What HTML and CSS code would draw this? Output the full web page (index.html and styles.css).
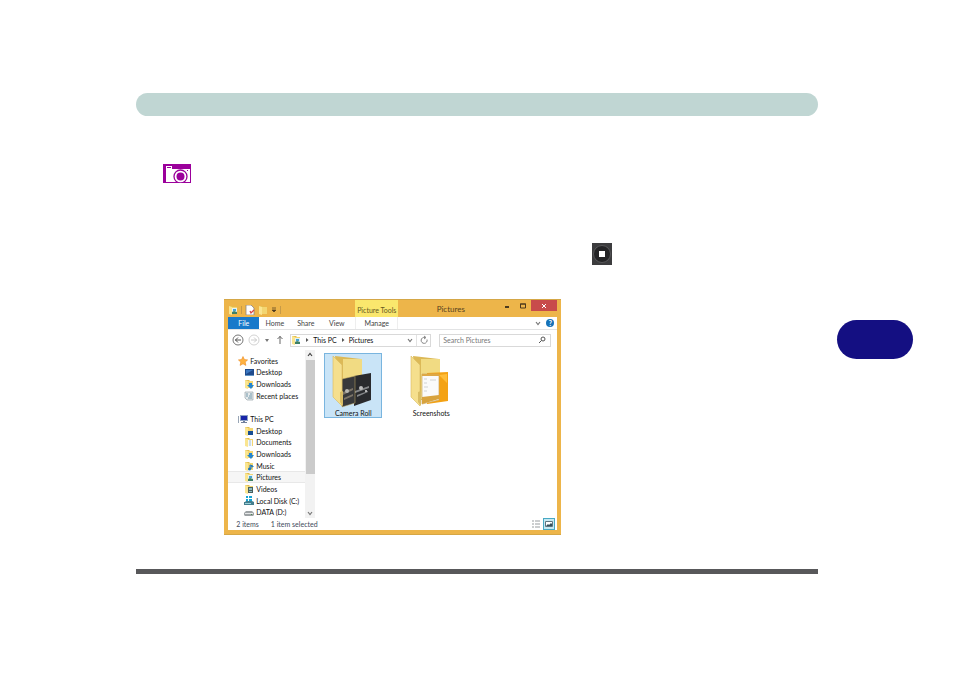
FILE: index.html
```html
<!DOCTYPE html>
<html lang="en">
<head>
<meta charset="utf-8">
<title>Pictures</title>
<link rel="stylesheet" href="styles.css">
</head>
<body>

<svg class="sprite" aria-hidden="true">
    <symbol id="folder" viewBox="0 0 10 10">
        <path d="M1 1h4l1 1h3v7H1z" fill="#e2bd4d"/>
        <path d="M1 1l3 1v8L1 9z" fill="#fae590"/>
        <path d="M4 2h5v7H4z" fill="#f3d671"/>
    </symbol>
    <symbol id="pictures" viewBox="0 0 10 10">
        <use href="#folder"/>
        <path d="M4 3h5v6H4z" fill="#e5f1f5"/>
        <path d="M5 4h3v2H5z" fill="#45a2cf"/>
        <path d="M4 7l2-1 3 1v2H4z" fill="#3f8065"/>
    </symbol>
    <symbol id="downloads" viewBox="0 0 10 10">
        <use href="#folder"/>
        <path d="M5 4h3v2h2L7 10 3 6h2z" fill="#2385cf"/>
    </symbol>
    <symbol id="desktop-folder" viewBox="0 0 10 10">
        <use href="#folder"/>
        <path d="M4 5h5v4H4z" fill="#174e94"/>
    </symbol>
    <symbol id="documents" viewBox="0 0 10 10">
        <use href="#folder"/>
        <path d="M4 3h4v6H4z" fill="#f5f8fa"/>
        <path d="M5 4h2M5 6h2M5 8h2" stroke="#699bc0" stroke-width=".6"/>
    </symbol>
    <symbol id="music" viewBox="0 0 10 10">
        <use href="#folder"/>
        <path d="M6 8V4l3 1v1L7 5v3" fill="none" stroke="#1b76bd"/>
        <circle cx="5.5" cy="8" r="1.5" fill="#1b76bd"/>
    </symbol>
    <symbol id="videos" viewBox="0 0 10 10">
        <use href="#folder"/>
        <path d="M4 3h5v6H4z" fill="#495f5e"/>
        <path d="M5 4h3v2H5zM5 7h3v1H5z" fill="#8cbdc2"/>
    </symbol>
    <symbol id="star" viewBox="0 0 10 10">
        <path d="M5 .5l1.4 3 3.2.4-2.4 2.2.7 3.3L5 7.8 2.1 9.4l.7-3.3L.4 3.9l3.2-.4z" fill="#ffb342" stroke="#ec8b23" stroke-width=".6"/>
    </symbol>
    <symbol id="desktop" viewBox="0 0 10 10">
        <path d="M1 2h9v7H1z" fill="#1f4a8b"/>
        <path d="M2 3h7L2 7z" fill="#3b78c2"/>
        <path d="M1 8h9v1H1z" fill="#6597c6"/>
    </symbol>
    <symbol id="recent" viewBox="0 0 10 10">
        <path d="M1 1h8v8H3L1 7z" fill="#e5eaec" stroke="#98a5ab" stroke-width=".7"/>
        <path d="M2 3h2M6 3h2M2 5h2M5 5h3M4 7h4" stroke="#538399" stroke-width=".8"/>
    </symbol>
    <symbol id="pc" viewBox="0 0 10 10">
        <path d="M0 2h1v7H0z" fill="#98a5b5"/>
        <path d="M2 1h8v6H2z" fill="#8da2c5"/>
        <path d="M3 2h6v4H3z" fill="#1825a8"/>
        <path d="M5 7h2v1h2v1H3V8h2z" fill="#71819d"/>
    </symbol>
    <symbol id="disk" viewBox="0 0 10 10">
        <path d="M2 0h2v2H2zM5 0h3v2H5zM2 3h2v2H2zM5 3h3v2H5z" fill="#17a5d3"/>
        <path d="M1 6l1-1h6l2 1v3H0V6z" fill="#447e8e"/>
        <path d="M1 7h6v1H1z" fill="#9bd1da"/>
    </symbol>
    <symbol id="drive" viewBox="0 0 10 10">
        <path d="M2 4h6l2 2v2L9 9H1L0 8V6z" fill="#9da2a4"/>
        <path d="M1 6h8v1H1z" fill="#e6e8e9"/>
        <path d="M7 7h1v1H7z" fill="#4b8b54"/>
    </symbol>
    <symbol id="down" viewBox="0 0 6 6">
        <path d="M1 2l2 2.5L5 2" fill="none" stroke="currentColor" stroke-width="1.2"/>
    </symbol>
</svg>

<div class="page">
    <main class="content">
        <header class="banner"></header>

        <svg class="camera" viewBox="0 0 28 19" role="img" aria-label="Camera">
            <path d="M0 0h28v19H0z" fill="#9b009b"/>
            <path d="M3 2h6v3h18v13H3z" fill="#fff"/>
            <path d="M4 3h4v1H4z" fill="#9b009b"/>
            <path d="M24 6h1v1h-1z" fill="#9b009b"/>
            <circle cx="17.5" cy="12.5" r="6.5" fill="#fff" stroke="#9b009b" stroke-width="1.3"/>
            <circle cx="17.5" cy="12.5" r="4" fill="#9b009b"/>
        </svg>

        <svg class="stop" viewBox="0 0 20 22" role="img" aria-label="Stop">
            <path d="M0 0h20v22H0z" fill="#3c3c3e"/>
            <circle cx="10" cy="11" r="8.5" fill="#242426" stroke="#58585a"/>
            <path d="M7 8h6v6H7z" fill="#fff"/>
        </svg>

        <section class="window">
            <div class="titlebar">
                <div class="quick">
                    <svg class="icon"><use href="#pictures"/></svg>
                    <i class="divider"></i>
                    <svg class="icon" viewBox="0 0 10 10">
                        <path d="M1 0h5l3 3v7H1z" fill="#fff" stroke="#8d8580" stroke-width=".8"/>
                        <path d="M5 6l1 2 3-3" fill="none" stroke="#d94343" stroke-width="1.3"/>
                    </svg>
                    <svg class="icon"><use href="#folder"/></svg>
                    <svg class="small" viewBox="0 0 6 6"><path d="M1 1h4M1 3h4L3 5z" stroke="#4d3a1d" stroke-width=".7" fill="#4d3a1d"/></svg>
                    <i class="divider"></i>
                </div>
                <div class="tools">Picture Tools</div>
                <h1 class="title">Pictures</h1>
                <div class="controls">
                    <button class="control" aria-label="Minimize"><svg class="icon" viewBox="0 0 10 10"><path d="M3 5h4v2H3z" fill="#4d3a1d"/></svg></button>
                    <button class="control" aria-label="Maximize"><svg class="icon" viewBox="0 0 10 10"><path d="M2.5 3h5v4h-5zM2 3h6" fill="none" stroke="#4d3a1d"/></svg></button>
                    <button class="control close" aria-label="Close"><svg class="icon" viewBox="0 0 10 10"><path d="M3 3l4 4m0-4l-4 4" stroke="#fff"/></svg></button>
                </div>
            </div>

            <div class="ribbon">
                <button class="tab file">File</button>
                <button class="tab">Home</button>
                <button class="tab">Share</button>
                <button class="tab">View</button>
                <button class="tab manage">Manage</button>
                <div class="help">
                    <svg class="small"><use href="#down"/></svg>
                    <button class="question" aria-label="Help">?</button>
                </div>
            </div>

            <div class="toolbar">
                <button class="round" aria-label="Back"><svg viewBox="0 0 12 12"><circle cx="6" cy="6" r="5" fill="none" stroke="#777"/><path d="M9 6H3m3-2.5L3.5 6 6 8.5" fill="none" stroke="#555"/></svg></button>
                <button class="round" aria-label="Forward"><svg viewBox="0 0 12 12"><circle cx="6" cy="6" r="5" fill="none" stroke="#d2d2d2"/><path d="M3 6h6M6 3.5L8.5 6 6 8.5" fill="none" stroke="#ccc"/></svg></button>
                <svg class="small" viewBox="0 0 6 6"><path d="M1 2h4L3 5z" fill="#777"/></svg>
                <button class="round" aria-label="Up"><svg viewBox="0 0 12 12"><path d="M6 10V2M3.5 5L6 2.5 8.5 5" fill="none" stroke="#666"/></svg></button>
                <div class="address">
                    <svg class="icon"><use href="#pictures"/></svg>
                    <svg class="small" viewBox="0 0 6 6"><path d="M2 1l2.5 2L2 5z" fill="#555"/></svg>
                    <a href="#">This PC</a>
                    <svg class="small" viewBox="0 0 6 6"><path d="M2 1l2.5 2L2 5z" fill="#555"/></svg>
                    <a href="#">Pictures</a>
                    <svg class="small history"><use href="#down"/></svg>
                    <button class="refresh" aria-label="Refresh"><svg class="icon" viewBox="0 0 10 10"><path d="M8 4.5A3 3 0 1 1 6 2.5M5 1l2 1.5L5 4" fill="none" stroke="#777" stroke-width=".9"/></svg></button>
                </div>
                <label class="search">
                    <input type="search" placeholder="Search Pictures" aria-label="Search Pictures">
                    <svg class="icon" viewBox="0 0 10 10"><circle cx="6" cy="4" r="2" fill="none" stroke="#555"/><path d="M4.5 5.5L2 8" stroke="#555"/></svg>
                </label>
            </div>

            <div class="body">
                <nav class="tree">
                    <a class="root" href="#"><svg class="icon"><use href="#star"/></svg>Favorites</a>
                    <a href="#"><svg class="icon"><use href="#desktop"/></svg>Desktop</a>
                    <a href="#"><svg class="icon"><use href="#downloads"/></svg>Downloads</a>
                    <a href="#"><svg class="icon"><use href="#recent"/></svg>Recent places</a>
                    <span></span>
                    <a class="root" href="#"><svg class="icon"><use href="#pc"/></svg>This PC</a>
                    <a href="#"><svg class="icon"><use href="#desktop-folder"/></svg>Desktop</a>
                    <a href="#"><svg class="icon"><use href="#documents"/></svg>Documents</a>
                    <a href="#"><svg class="icon"><use href="#downloads"/></svg>Downloads</a>
                    <a href="#"><svg class="icon"><use href="#music"/></svg>Music</a>
                    <a class="current" href="#"><svg class="icon"><use href="#pictures"/></svg>Pictures</a>
                    <a href="#"><svg class="icon"><use href="#videos"/></svg>Videos</a>
                    <a href="#"><svg class="icon"><use href="#disk"/></svg>Local Disk (C:)</a>
                    <a href="#"><svg class="icon"><use href="#drive"/></svg>DATA (D:)</a>
                </nav>
                <div class="scrollbar">
                    <svg class="small" viewBox="0 0 6 6"><path d="M1 4l2-2.5L5 4" fill="none" stroke="#444" stroke-width="1.2"/></svg>
                    <div class="thumb"></div>
                    <svg class="small"><use href="#down"/></svg>
                </div>
                <div class="files">
                    <a class="item selected" href="#">
                        <svg class="large" viewBox="0 0 42 54">
                            <path d="M3 2l26 3v41L9 46z" fill="#dcb957"/>
                            <path d="M11 5h19v40H11z" fill="#f1db83"/>
                            <path d="M22 22l17-3v27l-17 6z" fill="#292a2d"/>
                            <path d="M23 37l14-5v2l-14 5zM25 41l11-4v1l-11 5z" fill="#858789"/>
                            <circle cx="29" cy="34" r="2" fill="#bcbcbc"/>
                            <circle cx="34" cy="37" r="1" fill="#ddd"/>
                            <path d="M10 25l13-3v27l-13 4z" fill="#38393b" stroke="#cbb067" stroke-width=".5"/>
                            <path d="M11 38l10-4v2l-10 5zM12 44l9-4v2l-9 4z" fill="#7c7468"/>
                            <circle cx="15" cy="37" r="2" fill="#b9b7b2"/>
                            <path d="M1 2l9 9v41L1 43z" fill="#f5df8d" stroke="#d9ba5e" stroke-width=".6"/>
                            <path d="M8 38l3-1v15l-3-4z" fill="#d9bd65"/>
                        </svg>
                        <span>Camera Roll</span>
                    </a>
                    <a class="item" href="#">
                        <svg class="large" viewBox="0 0 42 54">
                            <path d="M3 2l26 3v41L9 46z" fill="#dcb957"/>
                            <path d="M11 5h19v40H11z" fill="#f1db83"/>
                            <path d="M17 19l21-1v29l-21 3z" fill="#f4a213"/>
                            <path d="M29 21l8-1v9z" fill="#ffbd39"/>
                            <path d="M12 20h17v26l-17 4z" fill="#fafafa" stroke="#c8a765" stroke-width=".7"/>
                            <path d="M12 20h17v2H12z" fill="#dda846"/>
                            <path d="M14 25h3M14 29h3M14 33h4M14 37h3M20 26h6" stroke="#c5c8c9" stroke-width=".8"/>
                            <path d="M12 43l17-2v4l-17 5z" fill="#d8a33e"/>
                            <path d="M1 2l9 9v41L1 43z" fill="#f5df8d" stroke="#d9ba5e" stroke-width=".6"/>
                            <path d="M8 38l3-1v15l-3-4z" fill="#d9bd65"/>
                        </svg>
                        <span>Screenshots</span>
                    </a>
                </div>
            </div>

            <footer class="status">
                <span>2 items</span>
                <span>1 item selected</span>
                <div class="views">
                    <button class="view" aria-label="Details"><svg class="icon" viewBox="0 0 10 10"><path d="M1 2h2M4 2h5M1 5h2M4 5h5M1 8h2M4 8h5" stroke="#8d9295" stroke-width=".9"/></svg></button>
                    <button class="view active" aria-label="Large icons"><svg class="icon" viewBox="0 0 10 10"><path d="M1.5 2.5h7v5h-7z" fill="#fff" stroke="#5d7480"/><path d="M2 7l2-2 1 1 2-2 1 1v2z" fill="#33515e"/></svg></button>
                </div>
            </footer>
        </section>

        <hr class="rule">
    </main>
    <aside class="marker"></aside>
</div>

</body>
</html>
```
FILE: styles.css
```css
* {
    box-sizing: border-box;
}

body {
    margin: 0;
    background: #fff;
    color: #111;
    font: 7px/10px Lato, "Noto Sans", sans-serif;
}

a {
    color: inherit;
    text-decoration: none;
}

button {
    display: flex;
    align-items: center;
    justify-content: center;
    padding: 0;
    border: 0;
    background: none;
    color: inherit;
    font: inherit;
}

svg {
    display: block;
    flex: none;
}

.sprite {
    display: none;
}

.icon {
    width: 10px;
    height: 10px;
}

.small {
    width: 6px;
    height: 6px;
    color: #777;
}

.page {
    display: grid;
    grid-template-columns: 1fr 5fr 1fr;
    padding-top: 93px;
}

.content {
    display: flex;
    flex-direction: column;
    grid-column: 2;
}

.banner {
    height: 23px;
    border-radius: 12px;
    background: #c0d6d3;
}

.camera {
    width: 28px;
    height: 19px;
    margin: 48px 0 0 27px;
}

.stop {
    width: 20px;
    height: 22px;
    margin: 60px 0 34px 456px;
}

.window {
    width: 100%;
    max-width: 337px;
    margin-left: 88px;
    padding: 0 4px 4px;
    border: 1px solid #d5a746;
    border-width: 1px 0;
    background: #edb54a;
}

.titlebar {
    display: grid;
    grid-template-columns: 127px 43px 1fr 58px;
    height: 17px;
}

.quick {
    display: flex;
    align-items: center;
    gap: 3px;
    padding-top: 2px;
}

.divider {
    width: 1px;
    height: 8px;
    background: #c69a48;
}

.tools {
    padding-top: 5px;
    background: #fae76d;
    color: #655922;
    text-align: center;
    white-space: nowrap;
}

.title {
    margin: 0;
    padding: 4px 0 0 4px;
    color: #56421f;
    font-size: 8px;
    font-weight: 400;
    text-align: center;
}

.controls {
    display: flex;
    align-items: flex-start;
}

.control {
    width: 16px;
    height: 12px;
}

.close {
    width: 26px;
    height: 11px;
    background: #c84b4b;
}

.ribbon {
    display: flex;
    height: 13px;
    border-bottom: 1px solid #e2e3e4;
    background: #fff;
    color: #444;
}

.tab {
    width: 31px;
}

.file {
    background: #1979ca;
    color: #fff;
}

.manage {
    width: 43px;
    margin-left: 3px;
    border: 1px solid #eee;
    border-width: 0 1px;
}

.help {
    display: flex;
    align-items: center;
    gap: 5px;
    margin-left: auto;
    padding-right: 3px;
}

.question {
    width: 8px;
    height: 8px;
    border-radius: 50%;
    background: #1672b8;
    color: #fff;
    font-weight: 700;
}

.toolbar {
    display: flex;
    align-items: center;
    gap: 4px;
    height: 20px;
    padding: 0 6px 0 4px;
    background: #fff;
}

.round,
.round svg {
    width: 12px;
    height: 12px;
}

.address {
    display: flex;
    flex: 1;
    align-items: center;
    gap: 3px;
    height: 13px;
    border: 1px solid #d9d9d9;
}

.history {
    margin-left: auto;
}

.refresh {
    width: 14px;
    height: 11px;
    border-left: 1px solid #e2e2e2;
}

.search {
    display: flex;
    align-items: center;
    width: 112px;
    height: 13px;
    margin-left: 4px;
    padding: 0 3px;
    border: 1px solid #d9d9d9;
}

.search input {
    flex: 1;
    min-width: 0;
    height: 11px;
    padding: 0;
    border: 0;
    outline: 0;
    background: none;
    font: inherit;
}

.search input::placeholder {
    color: #777;
}

.body {
    display: grid;
    grid-template-columns: 77px 10px 1fr;
    grid-template-rows: 100%;
    height: 168px;
    background: #fff;
}

.tree {
    display: grid;
    grid-template-rows: repeat(14, minmax(0, 1fr));
    padding-top: 5px;
}

.tree a {
    display: flex;
    align-items: center;
    gap: 2px;
    padding-left: 16px;
    white-space: nowrap;
}

.tree .root {
    padding-left: 10px;
}

.tree .current {
    border: 1px solid #e8e8e8;
    border-width: 1px 0;
    background: #f6f6f6;
}

.scrollbar {
    display: flex;
    flex-direction: column;
    align-items: center;
    padding: 2px 0;
    background: #f2f2f2;
}

.thumb {
    width: 9px;
    height: 114px;
    margin: 2px 0 auto;
    background: #cbcbcb;
}

.files {
    display: flex;
    align-items: flex-start;
    gap: 20px;
    padding: 3px 9px;
}

.item {
    display: flex;
    flex-direction: column;
    align-items: center;
    width: 58px;
    height: 65px;
    border: 1px solid transparent;
    white-space: nowrap;
}

.selected {
    border-color: #79b5df;
    background: #c9e4f7;
}

.large {
    width: 42px;
    height: 54px;
}

.status {
    display: flex;
    align-items: center;
    gap: 12px;
    height: 12px;
    padding: 0 2px 0 8px;
    background: #fff;
    color: #414a5a;
}

.views {
    display: flex;
    gap: 1px;
    margin-left: auto;
}

.view {
    width: 12px;
    height: 12px;
}

.active {
    border: 1px solid #48a9c4;
    background: #c5e8f2;
}

.rule {
    width: 100%;
    height: 5px;
    margin: 34px 0 0;
    border: 0;
    background: #58585a;
}

.marker {
    width: 76px;
    height: 39px;
    margin: 227px 0 0 19px;
    border-radius: 20px;
    background: #140f82;
}
```
